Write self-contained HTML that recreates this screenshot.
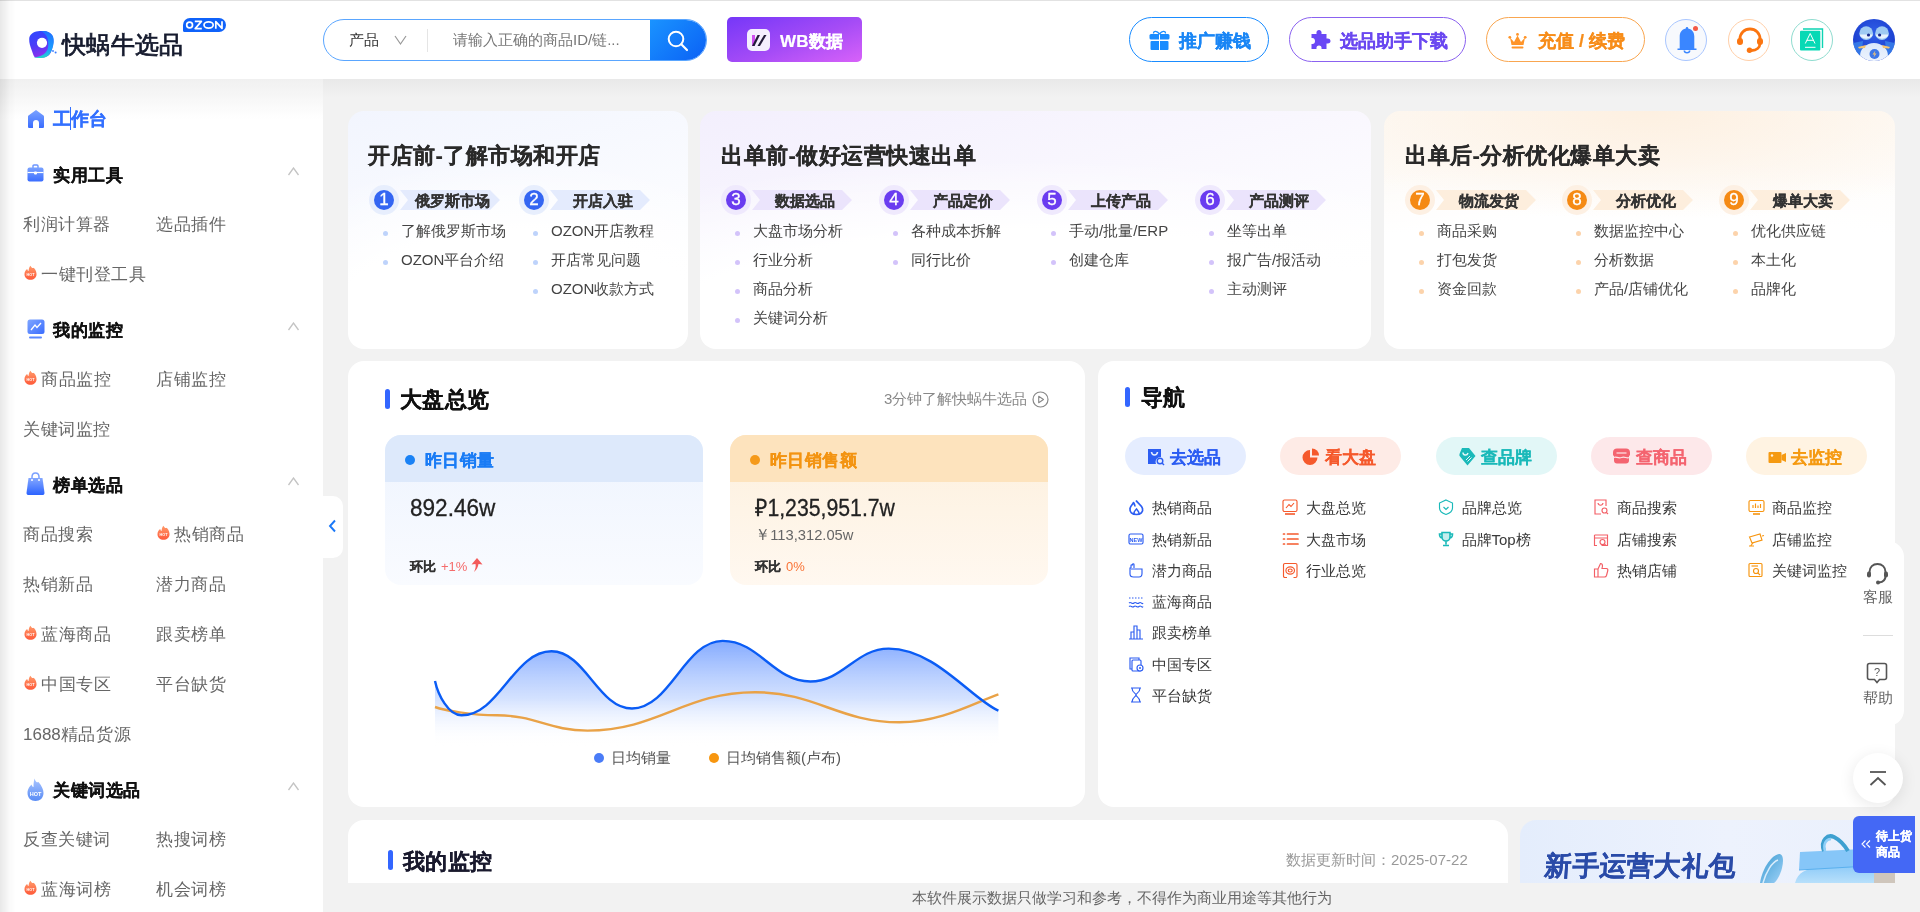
<!DOCTYPE html>
<html><head><meta charset="utf-8">
<style>
*{box-sizing:border-box;margin:0;padding:0}
html,body{width:1920px;height:912px;overflow:hidden}
body{position:relative;background:#f2f2f2;will-change:transform;font-family:"Liberation Sans",sans-serif;color:#333}
.a{position:absolute;white-space:nowrap}
#hdr{position:absolute;left:0;top:0;width:1920px;height:79px;background:#fff}
#hline{position:absolute;left:0;top:0;width:1920px;height:1px;background:#e2e2e2}
#hshadow{position:absolute;left:323px;top:79px;width:1597px;height:18px;background:linear-gradient(#e9e9e9,#f2f2f2)}
#side{position:absolute;left:0;top:79px;width:323px;height:833px;background:#fff}
#sshadow{position:absolute;left:0;top:79px;width:323px;height:40px;background:linear-gradient(#f0f0f0,rgba(255,255,255,0))}
#lshadow{position:absolute;left:0;top:0;width:16px;height:912px;background:linear-gradient(90deg,rgba(0,0,0,.09),rgba(0,0,0,.02) 60%,rgba(0,0,0,0))}
.pill{position:absolute;top:17px !important;height:45px;border-radius:23px;border:1.2px solid;font-weight:bold;font-size:18px}
.circ{position:absolute;top:19px;width:42px;height:42px;border-radius:50%;border:1px solid}
.si{position:absolute;font-size:17px;letter-spacing:0.6px;color:#666;line-height:20px;margin-top:1px}
.sh{position:absolute;font-size:17px;letter-spacing:0.5px;color:#111;font-weight:bold;line-height:20px;margin-top:1.5px}
.caret{position:absolute;left:288px;width:10px;height:10px}
.card{position:absolute;background:#fff;border-radius:16px;overflow:hidden}
[style*="font-weight:bold"],.sh,.pill{-webkit-text-stroke:0.22px currentColor}
</style></head><body>

<div id="hdr">
  <!-- logo -->
  <svg class="a" style="left:28px;top:30px" width="30" height="30" viewBox="0 0 30 30">
    <defs><linearGradient id="lg1" x1="0" y1="0" x2="0.3" y2="1"><stop offset="0" stop-color="#2e48ff"/><stop offset=".55" stop-color="#4a3cf8"/><stop offset="1" stop-color="#8a30ee"/></linearGradient>
    <linearGradient id="lg2" x1="0" y1="0" x2="0" y2="1"><stop offset="0" stop-color="#2070ff"/><stop offset=".7" stop-color="#1aa0ff"/><stop offset="1" stop-color="#22d8c8"/></linearGradient></defs>
    <path d="M10 1.3 C16 0.5 22 1.5 24.5 6 C26 9.5 25.5 15 24 19 C23 23 21 26.5 16 27.5 L7 27.5 C5.5 26 5 24 4 21 C2.5 17 1 13 1.2 9 C1.5 4.5 5 2 10 1.3Z" fill="url(#lg1)"/>
    <path d="M13 1 C19 0.6 23.5 2.5 25 6.5 C26.5 10 25.5 16 24 19.5 C22.5 23.5 20.5 26.5 15.5 27.8 C12 28.3 9 28 5.5 27.6 C10 27 15 26 18 22 C20.5 19 20.5 15 20 11 C19.5 6 17 3 13 1Z" fill="url(#lg2)"/>
    <circle cx="14" cy="12.8" r="5.1" fill="#fff"/>
    <circle cx="25" cy="21" r="0.9" fill="#3a7cff"/><circle cx="27.6" cy="22.4" r="1" fill="#3a7cff"/>
  </svg>
  <div class="a" style="left:62px;top:30px;font-size:24px;line-height:30px;color:#161b2e;-webkit-text-stroke:0.8px #161b2e;letter-spacing:0.3px">快蜗牛选品</div>
  <svg class="a" style="left:183px;top:18px" width="43" height="14" viewBox="0 0 43 14"><path d="M7 0 L36 0 A7 7 0 0 1 36 14 L1.5 14 Q0 14 0 12.5 L0 7 A7 7 0 0 1 7 0Z" fill="#0f62fa"/><g stroke="#fff" stroke-width="1.7" fill="none" stroke-linejoin="round"><circle cx="6.6" cy="7" r="2.9"/><path d="M11.8 3.4 L18.4 3.4 L12.2 10.6 L18.8 10.6"/><ellipse cx="25.6" cy="7" rx="4.6" ry="3.1"/><path d="M32.8 10.8 L32.8 3.6 L39 10.4 L39 3.2"/></g></svg>

  <!-- search -->
  <div class="a" style="left:323px;top:19px;width:384px;height:42px;border-radius:21px;border:1px solid #5aa6ff;background:#fff;overflow:hidden">
    <div class="a" style="left:25px;top:11px;font-size:15px;line-height:18px;color:#333">产品</div>
    <svg class="a" style="left:70px;top:14px" width="13" height="12" viewBox="0 0 13 12"><path d="M1 2 L6.5 10 L12 2" stroke="#999" stroke-width="1.2" fill="none"/></svg>
    <div class="a" style="left:103px;top:9px;width:1px;height:23px;background:#e5e5e5"></div>
    <div class="a" style="left:129px;top:11px;font-size:15px;line-height:18px;color:#777">请输入正确的商品ID/链...</div>
    <div class="a" style="left:326px;top:-1px;width:58px;height:42px;background:linear-gradient(135deg,#1a94ff,#0a5ff5)"></div>
    <svg class="a" style="left:343px;top:10px" width="22" height="22" viewBox="0 0 22 22"><circle cx="9" cy="9" r="7.3" stroke="#fff" stroke-width="2" fill="none"/><path d="M14.3 14.3 L20 20" stroke="#fff" stroke-width="2.2" stroke-linecap="round"/></svg>
  </div>

  <!-- WB -->
  <div class="a" style="left:727px;top:17px;width:135px;height:45px;border-radius:5px;background:linear-gradient(160deg,#7537f8,#a64cf6 55%,#d862f9)">
    <div class="a" style="left:20px;top:12px;width:23px;height:22px;border-radius:5px;background:#f5effe"></div>
    <svg class="a" style="left:20px;top:12px" width="23" height="22" viewBox="0 0 23 22"><rect x="5" y="6" width="3" height="11" fill="#d050f0"/><path d="M5 17 L10.5 6 L13 6 L7.5 17 Z" fill="#241c3a"/><path d="M10.5 17 L17 6 L19.5 6 L13 17 Z" fill="#241c3a"/></svg>
    <div class="a" style="left:53px;top:14px;font-size:17px;line-height:21px;color:#fff;font-weight:bold;letter-spacing:0.2px">WB数据</div>
  </div>

  <!-- right pills -->
  <div class="pill" style="left:1129px;top:16px;width:140px;border-color:#1a8cff;color:#1a86f5">
    <svg class="a" style="left:19px;top:12px" width="21" height="21" viewBox="0 0 21 21"><rect x="0.5" y="4" width="20" height="5.5" rx="1.5" fill="#1a8cff"/><rect x="1.5" y="11" width="18" height="9" rx="1" fill="#1a8cff"/><rect x="10" y="4" width="1" height="16" fill="#fff"/><path d="M10.5 4 C8 0.5 4.5 0.5 4.5 3.5 M10.5 4 C13 0.5 16.5 0.5 16.5 3.5" stroke="#1a8cff" stroke-width="1.3" fill="none"/></svg>
    <div class="a" style="left:49px;top:13px;line-height:21px">推广赚钱</div>
  </div>
  <div class="pill" style="left:1289px;top:16px;width:177px;border-color:#8b62f0;color:#6a48f0">
    <svg class="a" style="left:21px;top:12px" width="20" height="20" viewBox="0 0 20 20"><path d="M0.5 4 L5.5 4 C5 1 6.5 0 8 0 C9.5 0 11 1 10.5 4 L15.5 4 L15.5 8.5 C18.5 8 19.5 9.5 19.5 11 C19.5 12.5 18.5 14 15.5 13.5 L15.5 19 L10.5 19 C11 16.5 9.5 15.5 8 15.5 C6.5 15.5 5 16.5 5.5 19 L0.5 19 L0.5 14 C3 14.5 4 13 4 11 C4 9 3 7.5 0.5 8 Z" fill="#6a48f5"/></svg>
    <div class="a" style="left:50px;top:13px;line-height:21px;font-size:17.6px">选品助手下载</div>
  </div>
  <div class="pill" style="left:1486px;top:16px;width:159px;border-color:#f9a650;color:#f78d1a">
    <svg class="a" style="left:21px;top:15px" width="19" height="16" viewBox="0 0 19 16"><path d="M2 4.5 L6 9 L9.5 2.5 L13 9 L17 4.5 L15.5 12 L3.5 12 Z" fill="#ff9428"/><circle cx="1.8" cy="4.3" r="1.4" fill="#ff9428"/><circle cx="9.5" cy="1.4" r="1.4" fill="#ff9428"/><circle cx="17.2" cy="4.3" r="1.4" fill="#ff9428"/><rect x="3.5" y="13.5" width="12" height="2" rx="1" fill="#ff9428"/></svg>
    <div class="a" style="left:51px;top:13px;line-height:21px">充值 / 续费</div>
  </div>

  <div class="circ" style="left:1665px;border-color:#a9c6ff;background:#f7f9fd">
    <svg class="a" style="left:10px;top:6px" width="22" height="28" viewBox="0 0 22 28"><path d="M11 1 C11.8 1 12.2 1.6 12.2 2.4 C16.5 3.3 18.3 6.5 18.3 10.5 L18.3 22.5 L20.5 22.5 L20.5 24 L1.5 24 L1.5 22.5 L3.7 22.5 L3.7 10.5 C3.7 6.5 5.5 3.3 9.8 2.4 C9.8 1.6 10.2 1 11 1Z" fill="#3a86ff"/><path d="M8.3 24.5 C8.5 27.5 13.5 27.5 13.7 24.5" stroke="#3a86ff" stroke-width="1.6" fill="none"/></svg>
    <div class="a" style="left:26.5px;top:5.5px;width:5.5px;height:5.5px;border-radius:50%;background:#f45a48"></div>
  </div>
  <div class="circ" style="left:1728px;border-color:#ffcfa8;background:#fff">
    <svg class="a" style="left:7px;top:7px" width="28" height="26" viewBox="0 0 28 26"><path d="M4 14 L4 12 C4 6 8.5 2 14 2 C19.5 2 24 6 24 12 L24 16 C24 20.5 20.5 23.5 15.5 23.5" stroke="#fb7510" stroke-width="2.8" fill="none" stroke-linecap="round"/><rect x="1" y="11" width="6" height="7" rx="3" fill="#fb7510"/><rect x="21" y="11" width="6" height="7" rx="3" fill="#fb7510"/><circle cx="13.5" cy="23.3" r="2.7" fill="#fb7510"/></svg>
  </div>
  <div class="circ" style="left:1791px;border-color:#8fdccf;background:#fff">
    <svg class="a" style="left:7px;top:8px" width="26" height="24" viewBox="0 0 26 24"><path d="M4 1 L23.5 1 L23.5 20" stroke="#0dd4b3" stroke-width="1.4" fill="none"/><rect x="1" y="2.8" width="20.3" height="19.8" rx="1" fill="#06d9b5"/><path d="M6.3 15.5 L11.2 5.5 L16 15.5 M7.8 12.3 L14.5 12.3 M6 19.3 L16.5 19.3" stroke="#fff" stroke-width="1" fill="none"/></svg>
  </div>
  <svg class="a" style="left:1853px;top:19px" width="42" height="42" viewBox="0 0 42 42">
    <defs><radialGradient id="avg" cx=".5" cy=".35" r=".7"><stop offset="0" stop-color="#2f5fe8"/><stop offset="1" stop-color="#1636c8"/></radialGradient>
    <linearGradient id="avb" x1="0" y1="0" x2="0" y2="1"><stop offset="0" stop-color="#dbe8fb"/><stop offset="1" stop-color="#f5f9ff"/></linearGradient>
    <clipPath id="avc"><circle cx="21" cy="21" r="21"/></clipPath></defs>
    <circle cx="21" cy="21" r="21" fill="url(#avg)"/>
    <g clip-path="url(#avc)">
    <path d="M0 24 L10 22 L8 40 L0 40Z" fill="#3f8ef0" opacity=".7"/>
    <path d="M42 24 L32 22 L34 40 L42 40Z" fill="#3f8ef0" opacity=".7"/>
    <ellipse cx="21" cy="37" rx="14" ry="13" fill="url(#avb)"/>
    <path d="M5 28 L13 26 L12 29 L6 29.5Z M37 28 L29 26 L30 29 L36 29.5Z" fill="#f5c470"/>
    <ellipse cx="13.2" cy="14.2" rx="6.8" ry="6.9" fill="#9fcbf2"/><ellipse cx="29" cy="14.2" rx="6.8" ry="6.9" fill="#9fcbf2"/>
    <path d="M6.5 15.5 C8 21 18 21 20 15.5 Z" fill="#e8f3fd"/><path d="M22.3 15.5 C24 21 34 21 35.7 15.5 Z" fill="#e8f3fd"/>
    <circle cx="15.5" cy="16" r="1.6" fill="#1a2a8a"/><circle cx="26.6" cy="16" r="1.6" fill="#1a2a8a"/>
    <circle cx="21.5" cy="35" r="5" fill="#3d78e8"/>
    <path d="M22.5 31.5 L19.5 35.5 L21.5 35.5 L20.5 38.5 L23.5 34.5 L21.5 34.5 Z" fill="#f5c470"/>
    </g>
  </svg>
</div>
<div id="hline"></div>
<div id="hshadow"></div>

<div id="side">
</div>
<div id="sshadow"></div>

<svg class="a" style="left:27px;top:109px" width="18" height="20" viewBox="0 0 18 20"><defs><linearGradient id="hg" x1="0" y1="0" x2="0" y2="1"><stop offset="0" stop-color="#7aa2ff"/><stop offset="1" stop-color="#3a6dff"/></linearGradient></defs><path d="M9 1 L16.5 6.5 C17 7 17 7.3 17 8 L17 17.5 C17 18.5 16.5 19 15.5 19 L12 19 L12 14 C12 12.3 10.8 11 9 11 C7.2 11 6 12.3 6 14 L6 19 L2.5 19 C1.5 19 1 18.5 1 17.5 L1 8 C1 7.3 1 7 1.5 6.5 Z" fill="url(#hg)"/></svg>
<div class="a" style="left:53px;top:109px;font-size:18px;line-height:21px;color:#3370ff;font-weight:bold;-webkit-text-stroke:0.3px #3370ff">工作台</div>
<div class="a" style="left:70px;top:107px;width:1px;height:23px;background:#3370ff"></div>
<svg class="a" style="left:27px;top:164px" width="17" height="18" viewBox="0 0 17 18"><defs><linearGradient id="bg1" x1="0" y1="0" x2="0" y2="1"><stop offset="0" stop-color="#7aa2ff"/><stop offset="1" stop-color="#3a6dff"/></linearGradient></defs><path d="M6 4 L6 2 C6 1.3 6.3 1 7 1 L10 1 C10.7 1 11 1.3 11 2 L11 4" stroke="#6b95ff" stroke-width="1.4" fill="none"/><rect x="0.5" y="3.5" width="16" height="14" rx="2" fill="url(#bg1)"/><path d="M0.5 8.5 L16.5 8.5" stroke="#fff" stroke-width="1.2"/><rect x="7" y="7.5" width="3" height="3" rx="1" fill="#fff"/></svg>
<svg class="a" style="left:27px;top:319px" width="18" height="20" viewBox="0 0 18 20"><defs><linearGradient id="mg1" x1="0" y1="0" x2="1" y2="1"><stop offset="0" stop-color="#80a6ff"/><stop offset="1" stop-color="#3a6dff"/></linearGradient></defs><rect x="0.5" y="0.5" width="17" height="14.5" rx="2.5" fill="url(#mg1)"/><path d="M4 11 L8 6 L10 8.5 L14 4" stroke="#fff" stroke-width="1.3" fill="none"/><rect x="2" y="17.5" width="13" height="2" rx="1" fill="#5a88ff"/></svg>
<svg class="a" style="left:26px;top:472px" width="19" height="24" viewBox="0 0 19 24"><defs><linearGradient id="bg2" x1="0" y1="0" x2="0" y2="1"><stop offset="0" stop-color="#84a8ff"/><stop offset="1" stop-color="#2c63ff"/></linearGradient></defs><path d="M6 7 L6 5 C6 2.5 7.5 1 9.5 1 C11.5 1 13 2.5 13 5 L13 7" stroke="#7aa0ff" stroke-width="1.5" fill="none"/><path d="M2.5 6 L16.5 6 L18.5 21 C18.5 22.5 17.5 23 16.5 23 L2.5 23 C1.5 23 0.5 22.5 0.5 21 Z" fill="url(#bg2)"/><circle cx="6" cy="8" r="1" fill="#fff"/><circle cx="13" cy="8" r="1" fill="#fff"/></svg>
<svg class="a" style="left:27px;top:778px" width="17" height="24" viewBox="0 0 17 24"><defs><linearGradient id="bg3" x1="0" y1="0" x2="0" y2="1"><stop offset="0" stop-color="#a8c4ff"/><stop offset="1" stop-color="#5a8cf5"/></linearGradient></defs><path d="M7.5 0.5 C8.5 4 10.5 5 11.5 4 C15 8 16.5 12 16.5 15 C16.5 20 13 23 8.5 23 C4 23 0.5 20 0.5 15 C0.5 11 3 8 4.5 6.5 C5 8.5 6 9 6.5 9 C6.5 5.5 6.8 3 7.5 0.5Z" fill="url(#bg3)"/><text x="8.5" y="18" font-size="5.5" fill="#fff" text-anchor="middle" font-family="Liberation Sans" font-weight="bold">HOT</text></svg>
<div class="sh" style="left:53px;top:164px">实用工具</div>
<svg class="a" style="left:287px;top:167px" width="13" height="9" viewBox="0 0 13 9"><path d="M1.5 8 L6.5 1 L11.5 8" stroke="#c4c4c4" stroke-width="1.3" fill="none"/></svg>
<div class="si" style="left:23px;top:214px">利润计算器</div>
<div class="si" style="left:156px;top:214px">选品插件</div>
<svg class="a" style="left:24px;top:265px" width="13" height="15.5" viewBox="0 0 14 16"><defs><linearGradient id="fg24266" x1="0" y1="0" x2="0" y2="1"><stop offset="0" stop-color="#ff9a6a"/><stop offset="1" stop-color="#ff5a3a"/></linearGradient></defs><path d="M7 0.5 C8 3 10 3.5 10.5 2.5 C13 5 13.5 8 13.5 9.5 C13.5 13.3 10.5 15.5 7 15.5 C3.5 15.5 0.5 13.3 0.5 9.5 C0.5 7 2 5 3.5 4 C3.7 5.5 4.5 6 5 6 C5 3.5 6 1.5 7 0.5Z" fill="url(#fg24266)"/><text x="7" y="11.5" font-size="4" fill="#fff" text-anchor="middle" font-family="Liberation Sans" font-weight="bold">HOT</text></svg>
<div class="si" style="left:41px;top:264px">一键刊登工具</div>
<div class="sh" style="left:53px;top:319px">我的监控</div>
<svg class="a" style="left:287px;top:322px" width="13" height="9" viewBox="0 0 13 9"><path d="M1.5 8 L6.5 1 L11.5 8" stroke="#c4c4c4" stroke-width="1.3" fill="none"/></svg>
<svg class="a" style="left:24px;top:370px" width="13" height="15.5" viewBox="0 0 14 16"><defs><linearGradient id="fg24371" x1="0" y1="0" x2="0" y2="1"><stop offset="0" stop-color="#ff9a6a"/><stop offset="1" stop-color="#ff5a3a"/></linearGradient></defs><path d="M7 0.5 C8 3 10 3.5 10.5 2.5 C13 5 13.5 8 13.5 9.5 C13.5 13.3 10.5 15.5 7 15.5 C3.5 15.5 0.5 13.3 0.5 9.5 C0.5 7 2 5 3.5 4 C3.7 5.5 4.5 6 5 6 C5 3.5 6 1.5 7 0.5Z" fill="url(#fg24371)"/><text x="7" y="11.5" font-size="4" fill="#fff" text-anchor="middle" font-family="Liberation Sans" font-weight="bold">HOT</text></svg>
<div class="si" style="left:41px;top:369px">商品监控</div>
<div class="si" style="left:156px;top:369px">店铺监控</div>
<div class="si" style="left:23px;top:419px">关键词监控</div>
<div class="sh" style="left:53px;top:474px">榜单选品</div>
<svg class="a" style="left:287px;top:477px" width="13" height="9" viewBox="0 0 13 9"><path d="M1.5 8 L6.5 1 L11.5 8" stroke="#c4c4c4" stroke-width="1.3" fill="none"/></svg>
<div class="si" style="left:23px;top:524px">商品搜索</div>
<svg class="a" style="left:157px;top:525px" width="13" height="15.5" viewBox="0 0 14 16"><defs><linearGradient id="fg157526" x1="0" y1="0" x2="0" y2="1"><stop offset="0" stop-color="#ff9a6a"/><stop offset="1" stop-color="#ff5a3a"/></linearGradient></defs><path d="M7 0.5 C8 3 10 3.5 10.5 2.5 C13 5 13.5 8 13.5 9.5 C13.5 13.3 10.5 15.5 7 15.5 C3.5 15.5 0.5 13.3 0.5 9.5 C0.5 7 2 5 3.5 4 C3.7 5.5 4.5 6 5 6 C5 3.5 6 1.5 7 0.5Z" fill="url(#fg157526)"/><text x="7" y="11.5" font-size="4" fill="#fff" text-anchor="middle" font-family="Liberation Sans" font-weight="bold">HOT</text></svg>
<div class="si" style="left:174px;top:524px">热销商品</div>
<div class="si" style="left:23px;top:574px">热销新品</div>
<div class="si" style="left:156px;top:574px">潜力商品</div>
<svg class="a" style="left:24px;top:625px" width="13" height="15.5" viewBox="0 0 14 16"><defs><linearGradient id="fg24626" x1="0" y1="0" x2="0" y2="1"><stop offset="0" stop-color="#ff9a6a"/><stop offset="1" stop-color="#ff5a3a"/></linearGradient></defs><path d="M7 0.5 C8 3 10 3.5 10.5 2.5 C13 5 13.5 8 13.5 9.5 C13.5 13.3 10.5 15.5 7 15.5 C3.5 15.5 0.5 13.3 0.5 9.5 C0.5 7 2 5 3.5 4 C3.7 5.5 4.5 6 5 6 C5 3.5 6 1.5 7 0.5Z" fill="url(#fg24626)"/><text x="7" y="11.5" font-size="4" fill="#fff" text-anchor="middle" font-family="Liberation Sans" font-weight="bold">HOT</text></svg>
<div class="si" style="left:41px;top:624px">蓝海商品</div>
<div class="si" style="left:156px;top:624px">跟卖榜单</div>
<svg class="a" style="left:24px;top:675px" width="13" height="15.5" viewBox="0 0 14 16"><defs><linearGradient id="fg24676" x1="0" y1="0" x2="0" y2="1"><stop offset="0" stop-color="#ff9a6a"/><stop offset="1" stop-color="#ff5a3a"/></linearGradient></defs><path d="M7 0.5 C8 3 10 3.5 10.5 2.5 C13 5 13.5 8 13.5 9.5 C13.5 13.3 10.5 15.5 7 15.5 C3.5 15.5 0.5 13.3 0.5 9.5 C0.5 7 2 5 3.5 4 C3.7 5.5 4.5 6 5 6 C5 3.5 6 1.5 7 0.5Z" fill="url(#fg24676)"/><text x="7" y="11.5" font-size="4" fill="#fff" text-anchor="middle" font-family="Liberation Sans" font-weight="bold">HOT</text></svg>
<div class="si" style="left:41px;top:674px">中国专区</div>
<div class="si" style="left:156px;top:674px">平台缺货</div>
<div class="si" style="left:23px;top:724px"><span style="letter-spacing:0">1688</span>精品货源</div>
<div class="sh" style="left:53px;top:779px">关键词选品</div>
<svg class="a" style="left:287px;top:782px" width="13" height="9" viewBox="0 0 13 9"><path d="M1.5 8 L6.5 1 L11.5 8" stroke="#c4c4c4" stroke-width="1.3" fill="none"/></svg>
<div class="si" style="left:23px;top:829px">反查关键词</div>
<div class="si" style="left:156px;top:829px">热搜词榜</div>
<svg class="a" style="left:24px;top:880px" width="13" height="15.5" viewBox="0 0 14 16"><defs><linearGradient id="fg24881" x1="0" y1="0" x2="0" y2="1"><stop offset="0" stop-color="#ff9a6a"/><stop offset="1" stop-color="#ff5a3a"/></linearGradient></defs><path d="M7 0.5 C8 3 10 3.5 10.5 2.5 C13 5 13.5 8 13.5 9.5 C13.5 13.3 10.5 15.5 7 15.5 C3.5 15.5 0.5 13.3 0.5 9.5 C0.5 7 2 5 3.5 4 C3.7 5.5 4.5 6 5 6 C5 3.5 6 1.5 7 0.5Z" fill="url(#fg24881)"/><text x="7" y="11.5" font-size="4" fill="#fff" text-anchor="middle" font-family="Liberation Sans" font-weight="bold">HOT</text></svg>
<div class="si" style="left:41px;top:879px">蓝海词榜</div>
<div class="si" style="left:156px;top:879px">机会词榜</div>
<div class="card" style="left:348px;top:111px;width:340px;height:238px;background:radial-gradient(ellipse 323px 178px at 50% 95%, #fff 60%, rgba(255,255,255,0) 100%),linear-gradient(165deg,#f2f5fe 0%, #fff 80%)"></div>
<div class="a" style="left:368px;top:143px;font-size:22px;line-height:26px;font-weight:bold;color:#2a2a2a;letter-spacing:0.5px">开店前-了解市场和开店</div>
<div class="a" style="left:369px;top:185px;width:30px;height:30px;border-radius:50%;background:#e7eefd"></div>
<div class="a" style="left:374px;top:190px;width:20px;height:20px;border-radius:50%;background:#3466f2;color:#fff;font-size:17px;line-height:20px;text-align:center;-webkit-text-stroke:0.3px #fff">1</div>
<svg class="a" style="left:400px;top:190px" width="100" height="20" viewBox="0 0 100 20"><path d="M0 0 L90 0 L100 10 L90 20 L0 20 L8 10 Z" fill="#e4ebfd"/></svg>
<div class="a" style="left:409.5px;top:192px;width:86px;text-align:center;font-size:15px;line-height:18px;font-weight:bold;color:#333">俄罗斯市场</div>
<div class="a" style="left:383px;top:231px;width:5px;height:5px;border-radius:50%;background:#bed3fb"></div>
<div class="a" style="left:401px;top:222px;font-size:15px;line-height:18px;color:#444">了解俄罗斯市场</div>
<div class="a" style="left:383px;top:260px;width:5px;height:5px;border-radius:50%;background:#bed3fb"></div>
<div class="a" style="left:401px;top:251px;font-size:15px;line-height:18px;color:#444">OZON平台介绍</div>
<div class="a" style="left:519px;top:185px;width:30px;height:30px;border-radius:50%;background:#e7eefd"></div>
<div class="a" style="left:524px;top:190px;width:20px;height:20px;border-radius:50%;background:#3466f2;color:#fff;font-size:17px;line-height:20px;text-align:center;-webkit-text-stroke:0.3px #fff">2</div>
<svg class="a" style="left:550px;top:190px" width="100" height="20" viewBox="0 0 100 20"><path d="M0 0 L90 0 L100 10 L90 20 L0 20 L8 10 Z" fill="#e4ebfd"/></svg>
<div class="a" style="left:559.5px;top:192px;width:86px;text-align:center;font-size:15px;line-height:18px;font-weight:bold;color:#333">开店入驻</div>
<div class="a" style="left:533px;top:231px;width:5px;height:5px;border-radius:50%;background:#bed3fb"></div>
<div class="a" style="left:551px;top:222px;font-size:15px;line-height:18px;color:#444">OZON开店教程</div>
<div class="a" style="left:533px;top:260px;width:5px;height:5px;border-radius:50%;background:#bed3fb"></div>
<div class="a" style="left:551px;top:251px;font-size:15px;line-height:18px;color:#444">开店常见问题</div>
<div class="a" style="left:533px;top:289px;width:5px;height:5px;border-radius:50%;background:#bed3fb"></div>
<div class="a" style="left:551px;top:280px;font-size:15px;line-height:18px;color:#444">OZON收款方式</div>
<div class="card" style="left:700px;top:111px;width:671px;height:238px;background:radial-gradient(ellipse 637px 178px at 50% 95%, #fff 60%, rgba(255,255,255,0) 100%),linear-gradient(165deg,#f3effd 0%, #fff 80%)"></div>
<div class="a" style="left:721px;top:143px;font-size:22px;line-height:26px;font-weight:bold;color:#2a2a2a;letter-spacing:0.5px">出单前-做好运营快速出单</div>
<div class="a" style="left:721px;top:185px;width:30px;height:30px;border-radius:50%;background:#efe9fd"></div>
<div class="a" style="left:726px;top:190px;width:20px;height:20px;border-radius:50%;background:#6a3cf0;color:#fff;font-size:17px;line-height:20px;text-align:center;-webkit-text-stroke:0.3px #fff">3</div>
<svg class="a" style="left:752px;top:190px" width="100" height="20" viewBox="0 0 100 20"><path d="M0 0 L90 0 L100 10 L90 20 L0 20 L8 10 Z" fill="#ebe4fc"/></svg>
<div class="a" style="left:761.5px;top:192px;width:86px;text-align:center;font-size:15px;line-height:18px;font-weight:bold;color:#333">数据选品</div>
<div class="a" style="left:735px;top:231px;width:5px;height:5px;border-radius:50%;background:#d3c3fa"></div>
<div class="a" style="left:753px;top:222px;font-size:15px;line-height:18px;color:#444">大盘市场分析</div>
<div class="a" style="left:735px;top:260px;width:5px;height:5px;border-radius:50%;background:#d3c3fa"></div>
<div class="a" style="left:753px;top:251px;font-size:15px;line-height:18px;color:#444">行业分析</div>
<div class="a" style="left:735px;top:289px;width:5px;height:5px;border-radius:50%;background:#d3c3fa"></div>
<div class="a" style="left:753px;top:280px;font-size:15px;line-height:18px;color:#444">商品分析</div>
<div class="a" style="left:735px;top:318px;width:5px;height:5px;border-radius:50%;background:#d3c3fa"></div>
<div class="a" style="left:753px;top:309px;font-size:15px;line-height:18px;color:#444">关键词分析</div>
<div class="a" style="left:879px;top:185px;width:30px;height:30px;border-radius:50%;background:#efe9fd"></div>
<div class="a" style="left:884px;top:190px;width:20px;height:20px;border-radius:50%;background:#6a3cf0;color:#fff;font-size:17px;line-height:20px;text-align:center;-webkit-text-stroke:0.3px #fff">4</div>
<svg class="a" style="left:910px;top:190px" width="100" height="20" viewBox="0 0 100 20"><path d="M0 0 L90 0 L100 10 L90 20 L0 20 L8 10 Z" fill="#ebe4fc"/></svg>
<div class="a" style="left:919.5px;top:192px;width:86px;text-align:center;font-size:15px;line-height:18px;font-weight:bold;color:#333">产品定价</div>
<div class="a" style="left:893px;top:231px;width:5px;height:5px;border-radius:50%;background:#d3c3fa"></div>
<div class="a" style="left:911px;top:222px;font-size:15px;line-height:18px;color:#444">各种成本拆解</div>
<div class="a" style="left:893px;top:260px;width:5px;height:5px;border-radius:50%;background:#d3c3fa"></div>
<div class="a" style="left:911px;top:251px;font-size:15px;line-height:18px;color:#444">同行比价</div>
<div class="a" style="left:1037px;top:185px;width:30px;height:30px;border-radius:50%;background:#efe9fd"></div>
<div class="a" style="left:1042px;top:190px;width:20px;height:20px;border-radius:50%;background:#6a3cf0;color:#fff;font-size:17px;line-height:20px;text-align:center;-webkit-text-stroke:0.3px #fff">5</div>
<svg class="a" style="left:1068px;top:190px" width="100" height="20" viewBox="0 0 100 20"><path d="M0 0 L90 0 L100 10 L90 20 L0 20 L8 10 Z" fill="#ebe4fc"/></svg>
<div class="a" style="left:1077.5px;top:192px;width:86px;text-align:center;font-size:15px;line-height:18px;font-weight:bold;color:#333">上传产品</div>
<div class="a" style="left:1051px;top:231px;width:5px;height:5px;border-radius:50%;background:#d3c3fa"></div>
<div class="a" style="left:1069px;top:222px;font-size:15px;line-height:18px;color:#444">手动/批量/ERP</div>
<div class="a" style="left:1051px;top:260px;width:5px;height:5px;border-radius:50%;background:#d3c3fa"></div>
<div class="a" style="left:1069px;top:251px;font-size:15px;line-height:18px;color:#444">创建仓库</div>
<div class="a" style="left:1195px;top:185px;width:30px;height:30px;border-radius:50%;background:#efe9fd"></div>
<div class="a" style="left:1200px;top:190px;width:20px;height:20px;border-radius:50%;background:#6a3cf0;color:#fff;font-size:17px;line-height:20px;text-align:center;-webkit-text-stroke:0.3px #fff">6</div>
<svg class="a" style="left:1226px;top:190px" width="100" height="20" viewBox="0 0 100 20"><path d="M0 0 L90 0 L100 10 L90 20 L0 20 L8 10 Z" fill="#ebe4fc"/></svg>
<div class="a" style="left:1235.5px;top:192px;width:86px;text-align:center;font-size:15px;line-height:18px;font-weight:bold;color:#333">产品测评</div>
<div class="a" style="left:1209px;top:231px;width:5px;height:5px;border-radius:50%;background:#d3c3fa"></div>
<div class="a" style="left:1227px;top:222px;font-size:15px;line-height:18px;color:#444">坐等出单</div>
<div class="a" style="left:1209px;top:260px;width:5px;height:5px;border-radius:50%;background:#d3c3fa"></div>
<div class="a" style="left:1227px;top:251px;font-size:15px;line-height:18px;color:#444">报广告/报活动</div>
<div class="a" style="left:1209px;top:289px;width:5px;height:5px;border-radius:50%;background:#d3c3fa"></div>
<div class="a" style="left:1227px;top:280px;font-size:15px;line-height:18px;color:#444">主动测评</div>
<div class="card" style="left:1384px;top:111px;width:511px;height:238px;background:radial-gradient(ellipse 360px 110px at 52% 0%, #fdf0e1 0%, rgba(253,240,225,0) 100%),radial-gradient(ellipse 700px 190px at 50% 100%, #fff 70%, rgba(255,255,255,0) 100%),linear-gradient(170deg,#fdf9f4,#fffefd 70%)"></div>
<div class="a" style="left:1405px;top:143px;font-size:22px;line-height:26px;font-weight:bold;color:#2a2a2a;letter-spacing:0.5px">出单后-分析优化爆单大卖</div>
<div class="a" style="left:1405px;top:185px;width:30px;height:30px;border-radius:50%;background:#fdf0e3"></div>
<div class="a" style="left:1410px;top:190px;width:20px;height:20px;border-radius:50%;background:#f58a14;color:#fff;font-size:17px;line-height:20px;text-align:center;-webkit-text-stroke:0.3px #fff">7</div>
<svg class="a" style="left:1436px;top:190px" width="100" height="20" viewBox="0 0 100 20"><path d="M0 0 L90 0 L100 10 L90 20 L0 20 L8 10 Z" fill="#fdeedd"/></svg>
<div class="a" style="left:1445.5px;top:192px;width:86px;text-align:center;font-size:15px;line-height:18px;font-weight:bold;color:#333">物流发货</div>
<div class="a" style="left:1419px;top:231px;width:5px;height:5px;border-radius:50%;background:#fcd3ab"></div>
<div class="a" style="left:1437px;top:222px;font-size:15px;line-height:18px;color:#444">商品采购</div>
<div class="a" style="left:1419px;top:260px;width:5px;height:5px;border-radius:50%;background:#fcd3ab"></div>
<div class="a" style="left:1437px;top:251px;font-size:15px;line-height:18px;color:#444">打包发货</div>
<div class="a" style="left:1419px;top:289px;width:5px;height:5px;border-radius:50%;background:#fcd3ab"></div>
<div class="a" style="left:1437px;top:280px;font-size:15px;line-height:18px;color:#444">资金回款</div>
<div class="a" style="left:1562px;top:185px;width:30px;height:30px;border-radius:50%;background:#fdf0e3"></div>
<div class="a" style="left:1567px;top:190px;width:20px;height:20px;border-radius:50%;background:#f58a14;color:#fff;font-size:17px;line-height:20px;text-align:center;-webkit-text-stroke:0.3px #fff">8</div>
<svg class="a" style="left:1593px;top:190px" width="100" height="20" viewBox="0 0 100 20"><path d="M0 0 L90 0 L100 10 L90 20 L0 20 L8 10 Z" fill="#fdeedd"/></svg>
<div class="a" style="left:1602.5px;top:192px;width:86px;text-align:center;font-size:15px;line-height:18px;font-weight:bold;color:#333">分析优化</div>
<div class="a" style="left:1576px;top:231px;width:5px;height:5px;border-radius:50%;background:#fcd3ab"></div>
<div class="a" style="left:1594px;top:222px;font-size:15px;line-height:18px;color:#444">数据监控中心</div>
<div class="a" style="left:1576px;top:260px;width:5px;height:5px;border-radius:50%;background:#fcd3ab"></div>
<div class="a" style="left:1594px;top:251px;font-size:15px;line-height:18px;color:#444">分析数据</div>
<div class="a" style="left:1576px;top:289px;width:5px;height:5px;border-radius:50%;background:#fcd3ab"></div>
<div class="a" style="left:1594px;top:280px;font-size:15px;line-height:18px;color:#444">产品/店铺优化</div>
<div class="a" style="left:1719px;top:185px;width:30px;height:30px;border-radius:50%;background:#fdf0e3"></div>
<div class="a" style="left:1724px;top:190px;width:20px;height:20px;border-radius:50%;background:#f58a14;color:#fff;font-size:17px;line-height:20px;text-align:center;-webkit-text-stroke:0.3px #fff">9</div>
<svg class="a" style="left:1750px;top:190px" width="100" height="20" viewBox="0 0 100 20"><path d="M0 0 L90 0 L100 10 L90 20 L0 20 L8 10 Z" fill="#fdeedd"/></svg>
<div class="a" style="left:1759.5px;top:192px;width:86px;text-align:center;font-size:15px;line-height:18px;font-weight:bold;color:#333">爆单大卖</div>
<div class="a" style="left:1733px;top:231px;width:5px;height:5px;border-radius:50%;background:#fcd3ab"></div>
<div class="a" style="left:1751px;top:222px;font-size:15px;line-height:18px;color:#444">优化供应链</div>
<div class="a" style="left:1733px;top:260px;width:5px;height:5px;border-radius:50%;background:#fcd3ab"></div>
<div class="a" style="left:1751px;top:251px;font-size:15px;line-height:18px;color:#444">本土化</div>
<div class="a" style="left:1733px;top:289px;width:5px;height:5px;border-radius:50%;background:#fcd3ab"></div>
<div class="a" style="left:1751px;top:280px;font-size:15px;line-height:18px;color:#444">品牌化</div>
<div class="card" style="left:348px;top:361px;width:737px;height:446px"></div>
<div class="a" style="left:385px;top:389px;width:5px;height:20px;border-radius:3px;background:#3366ff"></div>
<div class="a" style="left:400px;top:387px;font-size:22px;line-height:26px;font-weight:bold;color:#111;letter-spacing:0.3px">大盘总览</div>
<div class="a" style="left:884px;top:390px;font-size:15px;line-height:18px;color:#888">3分钟了解快蜗牛选品</div>
<svg class="a" style="left:1032px;top:391px" width="17" height="17" viewBox="0 0 17 17"><circle cx="8.5" cy="8.5" r="7.5" stroke="#888" stroke-width="1.2" fill="none"/><path d="M6.7 5.3 L11.5 8.5 L6.7 11.7 Z" stroke="#888" stroke-width="1.1" fill="none" stroke-linejoin="round"/></svg>
<div class="a" style="left:385px;top:435px;width:318px;height:150px;border-radius:16px;overflow:hidden;background:linear-gradient(#eef4fe,#f9fbff)"><div class="a" style="left:0;top:0;width:318px;height:47px;background:#dde9fb"></div></div>
<div class="a" style="left:405px;top:455px;width:10px;height:10px;border-radius:50%;background:#1a82f5"></div>
<div class="a" style="left:425px;top:449.5px;font-size:17px;line-height:21px;font-weight:bold;color:#1a7cf5;letter-spacing:0.4px">昨日销量</div>
<div class="a" style="left:410px;top:494px;font-size:24px;line-height:28px;color:#222;-webkit-text-stroke:0.3px #222;transform:scaleX(0.94);transform-origin:0 0">892.46w</div>
<div class="a" style="left:410px;top:559px;font-size:13px;line-height:16px;font-weight:bold;color:#333">环比</div>
<div class="a" style="left:441px;top:559px;font-size:13px;line-height:16px;color:#f56c6c">+1%</div>
<svg class="a" style="left:470px;top:557px" width="13" height="16" viewBox="0 0 13 16"><path d="M7 1 L12.5 7.5 L8.5 7 C8 10 6.5 13 4 15 C5.5 12 6 9.5 5.5 7 L1.5 7.5 Z" fill="#f35b5b"/></svg>
<div class="a" style="left:730px;top:435px;width:318px;height:150px;border-radius:16px;overflow:hidden;background:linear-gradient(#fdf0dd,#fff8f0)"><div class="a" style="left:0;top:0;width:318px;height:47px;background:#fde3bd"></div></div>
<div class="a" style="left:750px;top:455px;width:10px;height:10px;border-radius:50%;background:#f59a1a"></div>
<div class="a" style="left:770px;top:449.5px;font-size:17px;line-height:21px;font-weight:bold;color:#f39412;letter-spacing:0.4px">昨日销售额</div>
<div class="a" style="left:755px;top:494px;font-size:24px;line-height:28px;color:#222;-webkit-text-stroke:0.3px #222;transform:scaleX(0.885);transform-origin:0 0">₽1,235,951.7w</div>
<div class="a" style="left:755px;top:526px;font-size:15.5px;line-height:18px;color:#666;transform:scaleX(0.95);transform-origin:0 0">￥113,312.05w</div>
<div class="a" style="left:755px;top:559px;font-size:13px;line-height:16px;font-weight:bold;color:#333">环比</div>
<div class="a" style="left:786px;top:559px;font-size:13px;line-height:16px;color:#fa7538">0%</div>
<svg class="a" style="left:0;top:0" width="1100" height="800" viewBox="0 0 1100 800"><defs><linearGradient id="areag" x1="0" y1="640" x2="0" y2="746" gradientUnits="userSpaceOnUse"><stop offset="0" stop-color="#78a2ff" stop-opacity=".92"/><stop offset=".55" stop-color="#b8cfff" stop-opacity=".62"/><stop offset="1" stop-color="#fff" stop-opacity="0"/></linearGradient></defs><path d="M435 681 C438.0 695.0 448.5 715.3 461.5 715.3 C499.3 715.3 513.7 651.3 551.5 651.3 C585.3 651.3 598.2 708.5 632 708.5 C670.1 708.5 684.6 640.9 722.7 640.9 C759.5 640.9 773.5 681.5 810.3 681.5 C843.2 681.5 855.8 648.6 888.7 648.6 C934.8 648.6 970.8 698.3 998.4 710.7 L998.4 746 L435 746 Z" fill="url(#areag)"/><path d="M435 707 C444.1 710.2 471.0 715.3 497 715.3 C535.0 715.3 549.5 730.6 587.5 730.6 C657.9 730.6 684.6 692.2 755 692.2 C815.6 692.2 838.8 722.3 899.4 722.3 C941.0 722.3 973.5 703.1 998.4 694.4" stroke="#e9a247" stroke-width="2.4" fill="none"/><path d="M435 681 C438.0 695.0 448.5 715.3 461.5 715.3 C499.3 715.3 513.7 651.3 551.5 651.3 C585.3 651.3 598.2 708.5 632 708.5 C670.1 708.5 684.6 640.9 722.7 640.9 C759.5 640.9 773.5 681.5 810.3 681.5 C843.2 681.5 855.8 648.6 888.7 648.6 C934.8 648.6 970.8 698.3 998.4 710.7" stroke="#0a5cf5" stroke-width="2.4" fill="none"/></svg>
<div class="a" style="left:594px;top:753px;width:10px;height:10px;border-radius:50%;background:#4a7cf7"></div>
<div class="a" style="left:611px;top:749px;font-size:15px;line-height:18px;color:#555">日均销量</div>
<div class="a" style="left:709px;top:753px;width:10px;height:10px;border-radius:50%;background:#f7960f"></div>
<div class="a" style="left:726px;top:749px;font-size:15px;line-height:18px;color:#555">日均销售额(卢布)</div>
<div class="card" style="left:1098px;top:361px;width:797px;height:446px"></div>
<div class="a" style="left:1125px;top:387px;width:5px;height:20px;border-radius:3px;background:#3366ff"></div>
<div class="a" style="left:1141px;top:385px;font-size:22px;line-height:26px;font-weight:bold;color:#111;letter-spacing:0px">导航</div>
<div class="a" style="left:1125px;top:437px;width:121px;height:38px;border-radius:19px;background:#e5edff"></div>
<svg class="a" style="left:1147px;top:448px" width="19" height="18" viewBox="0 0 19 18"><path d="M1 1 L14 1 L14 9 A5 5 0 0 0 9 16 L1 16 Z" fill="#2c5df2"/><path d="M4.5 4 C5 8 10 8 10.5 4" stroke="#e5edff" stroke-width="1.6" fill="none"/><circle cx="13" cy="13" r="2.8" stroke="#2c5df2" stroke-width="1.4" fill="none"/><path d="M15 15 L17 17" stroke="#2c5df2" stroke-width="1.4"/></svg>
<div class="a" style="left:1170px;top:447px;font-size:17px;line-height:21px;font-weight:bold;color:#2c5df2;-webkit-text-stroke:0.1px #2c5df2">去选品</div>
<div class="a" style="left:1280px;top:437px;width:121px;height:38px;border-radius:19px;background:#feebe6"></div>
<svg class="a" style="left:1302px;top:448px" width="19" height="18" viewBox="0 0 19 18"><path d="M8 2 A7.5 7.5 0 1 0 15.5 9.5 L8 9.5 Z" fill="#f5592c"/><path d="M10 0.5 A7 7 0 0 1 17 7.5 L10 7.5 Z" fill="#f5592c"/></svg>
<div class="a" style="left:1325px;top:447px;font-size:17px;line-height:21px;font-weight:bold;color:#f5592c;-webkit-text-stroke:0.1px #f5592c">看大盘</div>
<div class="a" style="left:1436px;top:437px;width:121px;height:38px;border-radius:19px;background:#e2f7f7"></div>
<svg class="a" style="left:1458px;top:448px" width="19" height="18" viewBox="0 0 19 18"><path d="M3 0 L10 0 L16.5 8 L8.5 17.5 L1 8.5 Q0 7.5 0.5 6 Z" fill="#1ab9b9" transform="translate(1 0)"/><path d="M5 4.5 C5 7.5 9 8 10 5" stroke="#e2f7f7" stroke-width="1.5" fill="none"/><path d="M8 12 L12 8 M9.5 13.5 L13.5 9.5" stroke="#e2f7f7" stroke-width="1"/></svg>
<div class="a" style="left:1481px;top:447px;font-size:17px;line-height:21px;font-weight:bold;color:#1ab9b9;-webkit-text-stroke:0.1px #1ab9b9">查品牌</div>
<div class="a" style="left:1591px;top:437px;width:121px;height:38px;border-radius:19px;background:#fde8ea"></div>
<svg class="a" style="left:1613px;top:448px" width="19" height="18" viewBox="0 0 19 18"><path d="M4 0.5 L13 0.5 C15.5 0.5 17 2 17 4.5 L17 6.5 C17 7.3 16.5 7.8 16 8 L16 12.5 C16 14.3 14.8 15.5 13 15.5 L4 15.5 C2.2 15.5 1 14.3 1 12.5 L1 8 C0.5 7.8 0 7.3 0 6.5 L0 4.5 C0 2 1.5 0.5 4 0.5Z" fill="#f46470"/><path d="M3.5 5 L13.5 5" stroke="#fde8ea" stroke-width="1.2"/><path d="M1 9.5 C3 8 5 11 8.5 9.5 C11.5 8 14 11 16 9.5" stroke="#fde8ea" stroke-width="1.2" fill="none"/></svg>
<div class="a" style="left:1636px;top:447px;font-size:17px;line-height:21px;font-weight:bold;color:#f46470;-webkit-text-stroke:0.1px #f46470">查商品</div>
<div class="a" style="left:1746px;top:437px;width:121px;height:38px;border-radius:19px;background:#fff3e2"></div>
<svg class="a" style="left:1768px;top:448px" width="19" height="18" viewBox="0 0 19 18"><rect x="0.5" y="4" width="13" height="11" rx="1" fill="#f59a12"/><path d="M13.5 7 L18 5 L18 14 L13.5 12 Z" fill="#f59a12"/><circle cx="4" cy="7.5" r="1.2" fill="#fff1de"/></svg>
<div class="a" style="left:1791px;top:447px;font-size:17px;line-height:21px;font-weight:bold;color:#f59a12;-webkit-text-stroke:0.1px #f59a12">去监控</div>
<svg class="a" style="left:1128px;top:499px" width="17" height="17" viewBox="0 0 17 17"><path d="M8 1.5 C9.5 4 13.5 6 14.5 9.5 C15.5 13 12.5 15.5 8.5 15.5 C4 15.5 1.5 13 2 9.5 C2.5 6.5 5 5.5 5.5 3.5 C6.5 5 7 6.5 7 7.5" stroke="#2c5df2" stroke-width="1.7" fill="none" stroke-linejoin="round"/><path d="M6 15.5 C5.5 12.5 7.5 11 8.5 10 C9.5 11.5 11.5 12.5 11 15" stroke="#2c5df2" stroke-width="1.5" fill="none"/></svg>
<div class="a" style="left:1151.5px;top:498.5px;font-size:15px;line-height:18px;color:#3a3a3a">热销商品</div>
<svg class="a" style="left:1128px;top:531px" width="17" height="17" viewBox="0 0 17 17"><rect x="1" y="3" width="14" height="10" rx="1.5" stroke="#2c5df2" stroke-width="1.15" fill="none"/><text x="8" y="10.5" font-size="5.5" fill="#2c5df2" text-anchor="middle" font-family="Liberation Sans" font-weight="bold">NEW</text></svg>
<div class="a" style="left:1151.5px;top:530.5px;font-size:15px;line-height:18px;color:#3a3a3a">热销新品</div>
<svg class="a" style="left:1128px;top:562px" width="17" height="17" viewBox="0 0 17 17"><path d="M3 6 L3 3.5 C3 2.5 4.5 2.5 4.5 3.5 L4.5 2.5 C4.5 1.5 6 1.5 6 2.5 L6 6 M3 6 L2 6 L2 12 C2 14 3.5 15 5.5 15 L11 15 C13 15 14 13.5 14 11.5 L14 7 L3 7" stroke="#2c5df2" stroke-width="1.15" fill="none"/></svg>
<div class="a" style="left:1151.5px;top:561.5px;font-size:15px;line-height:18px;color:#3a3a3a">潜力商品</div>
<svg class="a" style="left:1128px;top:593px" width="17" height="17" viewBox="0 0 17 17"><path d="M1 5 L15 5" stroke="#2c5df2" stroke-width="1.1" stroke-dasharray="1.5 1.5"/><path d="M1 10 C3 8 4 12 6 10 C8 8 9 12 11 10 C13 8 14 12 15 10 M1 13.5 C3 11.5 4 15.5 6 13.5 C8 11.5 9 15.5 11 13.5 C13 11.5 14 15.5 15 13.5" stroke="#2c5df2" stroke-width="1.15" fill="none"/></svg>
<div class="a" style="left:1151.5px;top:592.5px;font-size:15px;line-height:18px;color:#3a3a3a">蓝海商品</div>
<svg class="a" style="left:1128px;top:624px" width="17" height="17" viewBox="0 0 17 17"><path d="M1 15 L15 15 M3 15 L3 8 L6 8 L6 15 M6 15 L6 2 L9 2 L9 15 M9 15 L9 6 L12 6 L12 15" stroke="#2c5df2" stroke-width="1.15" fill="none"/></svg>
<div class="a" style="left:1151.5px;top:623.5px;font-size:15px;line-height:18px;color:#3a3a3a">跟卖榜单</div>
<svg class="a" style="left:1128px;top:656px" width="17" height="17" viewBox="0 0 17 17"><path d="M11 4 L11 2 L2 2 L2 13 L4 13" stroke="#2c5df2" stroke-width="1.15" fill="none"/><rect x="4" y="4" width="9" height="11" rx="1" stroke="#2c5df2" stroke-width="1.15" fill="none"/><circle cx="12" cy="12" r="3" fill="#fff" stroke="#2c5df2" stroke-width="1.15" fill="none"/><circle cx="12" cy="12" r="1" fill="#2c5df2"/></svg>
<div class="a" style="left:1151.5px;top:655.5px;font-size:15px;line-height:18px;color:#3a3a3a">中国专区</div>
<svg class="a" style="left:1128px;top:687px" width="17" height="17" viewBox="0 0 17 17"><path d="M3 1 L13 1 M3 15 L13 15 M4 1 C4 6 8 6 8 8 C8 10 4 10 4 15 M12 1 C12 6 8 6 8 8 C8 10 12 10 12 15" stroke="#2c5df2" stroke-width="1.15" fill="none"/></svg>
<div class="a" style="left:1151.5px;top:686.5px;font-size:15px;line-height:18px;color:#3a3a3a">平台缺货</div>
<svg class="a" style="left:1282px;top:499px" width="17" height="17" viewBox="0 0 17 17"><rect x="1" y="1" width="14" height="11.5" rx="1.5" stroke="#f5592c" stroke-width="1.15" fill="none"/><path d="M4 9 L7 5.5 L9 7.5 L12 4" stroke="#f5592c" stroke-width="1.15" fill="none"/><path d="M3 15 L13 15" stroke="#f5592c" stroke-width="1.6"/></svg>
<div class="a" style="left:1305.5px;top:498.5px;font-size:15px;line-height:18px;color:#3a3a3a">大盘总览</div>
<svg class="a" style="left:1282px;top:531px" width="17" height="17" viewBox="0 0 17 17"><path d="M1.5 3 L2.5 3 M1.5 8 L2.5 8 M1.5 13 L2.5 13 M5.5 3 L16 3 M5.5 8 L16 8 M5.5 13 L16 13" stroke="#f5592c" stroke-width="1.7" stroke-linecap="round" fill="none"/></svg>
<div class="a" style="left:1305.5px;top:530.5px;font-size:15px;line-height:18px;color:#3a3a3a">大盘市场</div>
<svg class="a" style="left:1282px;top:562px" width="17" height="17" viewBox="0 0 17 17"><path d="M5 15.5 L3 15.5 C2 15.5 1.5 15 1.5 14 L1.5 3 C1.5 2 2 1.5 3 1.5 L13.5 1.5 C14.5 1.5 15 2 15 3 L15 14 C15 15 14.5 15.5 13.5 15.5 L11.5 15.5" stroke="#f5592c" stroke-width="1.15" fill="none"/><ellipse cx="8.2" cy="8.5" rx="4.3" ry="3.6" stroke="#f5592c" stroke-width="1.15" fill="none"/><ellipse cx="8.2" cy="8.5" rx="2" ry="1.5" stroke="#f5592c" stroke-width="1.15" fill="none"/></svg>
<div class="a" style="left:1305.5px;top:561.5px;font-size:15px;line-height:18px;color:#3a3a3a">行业总览</div>
<svg class="a" style="left:1438px;top:499px" width="17" height="17" viewBox="0 0 17 17"><path d="M8 1 L14.5 4 L14.5 9 C14.5 12 11 14.5 8 15.5 C5 14.5 1.5 12 1.5 9 L1.5 4 Z" stroke="#1ab9b9" stroke-width="1.15" fill="none"/><path d="M5.5 8 L8 10.5 L10.5 8" stroke="#1ab9b9" stroke-width="1.15" fill="none"/></svg>
<div class="a" style="left:1461.5px;top:498.5px;font-size:15px;line-height:18px;color:#3a3a3a">品牌总览</div>
<svg class="a" style="left:1438px;top:531px" width="17" height="17" viewBox="0 0 17 17"><path d="M4 1.5 L12 1.5 L12 6 C12 8.5 10 10 8 10 C6 10 4 8.5 4 6 Z" fill="#1ab9b9" opacity=".25"/><path d="M4 1.5 L12 1.5 L12 6 C12 8.5 10 10 8 10 C6 10 4 8.5 4 6 Z M4 3 L1.5 3 C1.5 6 3 7 4.5 7 M12 3 L14.5 3 C14.5 6 13 7 11.5 7 M8 10 L8 13.5 M5 14.5 L11 14.5" stroke="#1ab9b9" stroke-width="1.6" fill="none"/></svg>
<div class="a" style="left:1461.5px;top:530.5px;font-size:15px;line-height:18px;color:#3a3a3a">品牌Top榜</div>
<svg class="a" style="left:1593px;top:499px" width="17" height="17" viewBox="0 0 17 17"><path d="M13 7 L13 1 L2 1 L2 15 L8 15" stroke="#f35f66" stroke-width="1.15" fill="none"/><path d="M5 4 C5.5 7 9.5 7 10 4" stroke="#f35f66" stroke-width="1.15" fill="none"/><circle cx="11.5" cy="11.5" r="2.5" stroke="#f35f66" stroke-width="1.15" fill="none"/><path d="M13.3 13.3 L15 15" stroke="#f35f66" stroke-width="1.15" fill="none"/></svg>
<div class="a" style="left:1616.5px;top:498.5px;font-size:15px;line-height:18px;color:#3a3a3a">商品搜索</div>
<svg class="a" style="left:1593px;top:531px" width="17" height="17" viewBox="0 0 17 17"><path d="M1.5 4 L14.5 4 L14.5 14.5 L8.5 14.5 M1.5 4 L1.5 14.5 L4 14.5 M1.5 7 L14.5 7" stroke="#f35f66" stroke-width="1.15" fill="none"/><circle cx="9.5" cy="11" r="2.5" stroke="#f35f66" stroke-width="1.15" fill="none"/><path d="M11.3 12.8 L13 14.5" stroke="#f35f66" stroke-width="1.15" fill="none"/></svg>
<div class="a" style="left:1616.5px;top:530.5px;font-size:15px;line-height:18px;color:#3a3a3a">店铺搜索</div>
<svg class="a" style="left:1593px;top:562px" width="17" height="17" viewBox="0 0 17 17"><path d="M5 7 L7.5 1.5 C9 1.5 9.5 2.5 9.5 4 L9 6.5 L13.5 6.5 C14.5 6.5 15 7.5 14.8 8.5 L13.5 13.5 C13.2 14.5 12.5 15 11.5 15 L5 15 Z M5 7 L1.5 7 L1.5 15 L5 15" stroke="#f35f66" stroke-width="1.15" fill="none"/></svg>
<div class="a" style="left:1616.5px;top:561.5px;font-size:15px;line-height:18px;color:#3a3a3a">热销店铺</div>
<svg class="a" style="left:1748px;top:499px" width="17" height="17" viewBox="0 0 17 17"><rect x="1" y="1.5" width="15" height="11" rx="1.5" stroke="#f7950f" stroke-width="1.15" fill="none"/><path d="M5 9 L5 6 M7.5 9 L7.5 4.5 M10 9 L10 6.5 M12.5 9 L12.5 5" stroke="#f7950f" stroke-width="1.15" fill="none"/><path d="M5 15 L12 15" stroke="#f7950f" stroke-width="1.6"/></svg>
<div class="a" style="left:1771.5px;top:498.5px;font-size:15px;line-height:18px;color:#3a3a3a">商品监控</div>
<svg class="a" style="left:1748px;top:531px" width="17" height="17" viewBox="0 0 17 17"><path d="M1.5 6 L12 3 L14 9 L4 12 Z" stroke="#f7950f" stroke-width="1.15" fill="none"/><path d="M14 5 L16 4.5 M5 12 L2.5 15 M1 15 L6 15" stroke="#f7950f" stroke-width="1.15" fill="none"/></svg>
<div class="a" style="left:1771.5px;top:530.5px;font-size:15px;line-height:18px;color:#3a3a3a">店铺监控</div>
<svg class="a" style="left:1748px;top:562px" width="17" height="17" viewBox="0 0 17 17"><rect x="1" y="1.5" width="13" height="13" rx="1" stroke="#f7950f" stroke-width="1.15" fill="none"/><path d="M3.5 4 L10 4" stroke="#f7950f" stroke-width="1.15" fill="none"/><circle cx="8" cy="9" r="2.5" stroke="#f7950f" stroke-width="1.15" fill="none"/><path d="M9.8 10.8 L12 13" stroke="#f7950f" stroke-width="1.15" fill="none"/></svg>
<div class="a" style="left:1771.5px;top:561.5px;font-size:15px;line-height:18px;color:#3a3a3a">关键词监控</div>
<div class="card" style="left:348px;top:820px;width:1160px;height:120px"></div>
<div class="a" style="left:388px;top:850px;width:5px;height:20px;border-radius:3px;background:#3366ff"></div>
<div class="a" style="left:403px;top:849px;font-size:22px;line-height:26px;font-weight:bold;color:#1a1a2e;letter-spacing:0.3px">我的监控</div>
<div class="a" style="left:1286px;top:851px;font-size:15px;line-height:18px;color:#999">数据更新时间：2025-07-22</div>
<div class="card" style="left:1520px;top:820px;width:375px;height:120px;background:linear-gradient(90deg,#e4edfc,#edf2fd 55%,#eaf0fc)"><div class="a" style="left:26px;top:29.5px;font-size:27px;line-height:32px;font-weight:900;color:#2a4ba8;-webkit-text-stroke:0.2px #2a4ba8;transform:skewX(-4deg) scaleX(1.0);transform-origin:0 0;letter-spacing:0.3px">新手运营大礼包</div><svg class="a" style="left:230px;top:0" width="145" height="63" viewBox="0 0 145 63"><defs><linearGradient id="gb" x1="0" y1="0" x2="0" y2="1"><stop offset="0" stop-color="#8ccaf8"/><stop offset="1" stop-color="#b8e0fb"/></linearGradient><linearGradient id="gd" x1="0" y1="0" x2="1" y2="1"><stop offset="0" stop-color="#3a9ad0"/><stop offset="1" stop-color="#9fd2f8"/></linearGradient></defs><path d="M10 63 C12 50 20 36 29 34 C33 34 34 40 32 48 C30 56 26 62 24 63 Z" fill="url(#gd)"/><path d="M13 63 C16 52 22 42 28 40" stroke="#d8ecfb" stroke-width="1.5" fill="none"/><path d="M45 63 C48 52 55 49 70 48 L130 45 C138 45 140 52 140 63 Z" fill="url(#gb)"/><path d="M50 32 L113 29 L118 46 L49 50 Z" fill="#86c6f8"/><path d="M49 50 L118 46" stroke="#5ab0ee" stroke-width="1.2"/><path d="M74 31 C70 20 78 14 84 17 C90 20 95 26 98 31" stroke="#3ea0d0" stroke-width="4" fill="none"/><path d="M75 31 C73 24 76 19 81 19" stroke="#8fd0f8" stroke-width="2.5" fill="none"/><rect x="104" y="16" width="6" height="14" rx="2" fill="#9fd8fa"/><rect x="124" y="53" width="21" height="10" fill="#cfc6bc"/></svg></div>
<div class="a" style="left:323px;top:883px;width:1597px;height:29px;background:#f2f2f2"></div>
<div class="a" style="left:912px;top:889px;font-size:15px;line-height:18px;color:#666">本软件展示数据只做学习和参考，不得作为商业用途等其他行为</div>
<div class="a" style="left:323px;top:496px;width:20px;height:62px;background:#fff;border-radius:0 10px 10px 0"></div>
<svg class="a" style="left:328px;top:519px" width="9" height="14" viewBox="0 0 9 14"><path d="M7 1.5 L2 7 L7 12.5" stroke="#1a78f8" stroke-width="1.9" fill="none"/></svg>
<div class="a" style="left:1848px;top:541px;width:56px;height:185px;background:#fff;border-radius:0 16px 16px 0"></div>
<svg class="a" style="left:1866px;top:562px" width="23" height="23" viewBox="0 0 23 23"><path d="M3.5 12 L3.5 10 C3.5 5 7 2 11.5 2 C16 2 19.5 5 19.5 10 L19.5 14 C19.5 17.5 17 20 13 20.5" stroke="#555" stroke-width="2" fill="none"/><rect x="1" y="9.5" width="4" height="6" rx="2" fill="#555"/><rect x="18" y="9.5" width="4" height="6" rx="2" fill="#555"/><circle cx="12" cy="20.5" r="2" fill="#555"/></svg>
<div class="a" style="left:1863px;top:588px;font-size:15px;line-height:18px;color:#666">客服</div>
<div class="a" style="left:1863px;top:635px;width:30px;height:1px;background:#ddd"></div>
<svg class="a" style="left:1866px;top:662px" width="23" height="23" viewBox="0 0 23 23"><path d="M3.5 1.5 L18.5 1.5 C19.8 1.5 20.5 2.2 20.5 3.5 L20.5 15.5 C20.5 16.8 19.8 17.5 18.5 17.5 L13.5 17.5 L11 20.5 L8.5 17.5 L3.5 17.5 C2.2 17.5 1.5 16.8 1.5 15.5 L1.5 3.5 C1.5 2.2 2.2 1.5 3.5 1.5Z" stroke="#555" stroke-width="1.6" fill="none"/><text x="11" y="14" font-size="11" fill="#555" text-anchor="middle" font-family="Liberation Sans">?</text></svg>
<div class="a" style="left:1863px;top:689px;font-size:15px;line-height:18px;color:#666">帮助</div>
<div class="a" style="left:1853px;top:753px;width:50px;height:50px;border-radius:50%;background:#fff;box-shadow:0 3px 16px rgba(0,0,0,.09)"></div>
<svg class="a" style="left:1868px;top:770px" width="20" height="18" viewBox="0 0 20 18"><path d="M2 2 L18 2" stroke="#555" stroke-width="1.8"/><path d="M2.5 15 L10 8 L17.5 15" stroke="#555" stroke-width="1.8" fill="none"/></svg>
<div class="a" style="left:1853px;top:816px;width:62px;height:57px;background:#4468f5;border-radius:6px 0 0 6px"></div>
<svg class="a" style="left:1861px;top:840px" width="10" height="8" viewBox="0 0 10 8"><path d="M4.5 0.5 L1 4 L4.5 7.5 M9 0.5 L5.5 4 L9 7.5" stroke="#fff" stroke-width="1.1" fill="none"/></svg>
<div class="a" style="left:1876px;top:829px;font-size:12px;line-height:15.5px;font-weight:bold;color:#fff;text-align:left">待上货<br>商品</div>
<div id="lshadow"></div>

</body></html>
